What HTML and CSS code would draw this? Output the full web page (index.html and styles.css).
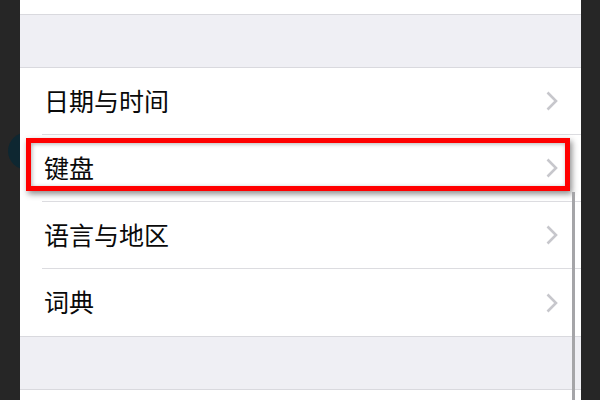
FILE: index.html
```html
<!DOCTYPE html>
<html lang="zh-CN">
<head>
<meta charset="utf-8">
<title>通用</title>
<link rel="stylesheet" href="styles.css">
</head>
<body>
<div class="blob"></div>
<div class="panel">
  <div class="top"></div>
  <div class="spacer"></div>
  <div class="group">
    <div class="row"><span class="label">日期与时间</span><svg class="chev" width="12" height="20" viewBox="0 0 12 20"><polyline points="1.5,1.5 10,10 1.5,18.5" fill="none" stroke="#c7c7cc" stroke-width="2.6"/></svg></div>
    <div class="row"><span class="label">键盘</span><svg class="chev" width="12" height="20" viewBox="0 0 12 20"><polyline points="1.5,1.5 10,10 1.5,18.5" fill="none" stroke="#c7c7cc" stroke-width="2.6"/></svg></div>
    <div class="row"><span class="label">语言与地区</span><svg class="chev" width="12" height="20" viewBox="0 0 12 20"><polyline points="1.5,1.5 10,10 1.5,18.5" fill="none" stroke="#c7c7cc" stroke-width="2.6"/></svg></div>
    <div class="row last"><span class="label">词典</span><svg class="chev" width="12" height="20" viewBox="0 0 12 20"><polyline points="1.5,1.5 10,10 1.5,18.5" fill="none" stroke="#c7c7cc" stroke-width="2.6"/></svg></div>
  </div>
  <div class="spacer"></div>
  <div class="bottom"></div>
  <div class="highlight"></div>
  <div class="scrollbar"></div>
</div>
</body>
</html>
```
FILE: styles.css
```css
html, body {
  margin: 0;
  padding: 0;
  height: 100%;
  overflow: hidden;
  background: #262626;
}
body {
  position: relative;
  font-family: "Noto Sans CJK SC", "Noto Sans", sans-serif;
}
.blob {
  position: absolute;
  left: 8px;
  top: 132px;
  width: 40px;
  height: 38px;
  border-radius: 50%;
  background: #0e2731;
}
.panel {
  position: relative;
  margin-left: 20px;
  width: 561px;
  height: 400px;
  background: #efeff4;
  overflow: hidden;
}
.top {
  height: 14px;
  background: #fff;
  border-bottom: 1px solid #d9d9de;
}
.spacer {
  height: 52px;
  background: #efeff4;
}
.group {
  background: #fff;
  border-top: 1px solid #d9d9de;
  border-bottom: 1px solid #d9d9de;
}
.row {
  height: 67px;
  margin-left: 22px;
  padding-right: 23px;
  display: flex;
  align-items: center;
  justify-content: space-between;
  box-sizing: border-box;
  border-bottom: 1px solid #dcdce0;
}
.row.last {
  border-bottom: none;
  height: 67px;
}
.label {
  font-size: 25px;
  color: #0a0a0a;
  padding-left: 2px;
  padding-bottom: 3px;
}
.chev {
  display: block;
}
.bottom {
  height: 20px;
  background: #fff;
  border-top: 1px solid #d9d9de;
}
.highlight {
  position: absolute;
  left: 6px;
  top: 138px;
  width: 544px;
  height: 53px;
  box-sizing: border-box;
  border: 5px solid #ff0000;
  box-shadow: 2px 3px 6px rgba(0, 0, 0, 0.45), inset 1px 1px 4px rgba(0, 0, 0, 0.3);
}
.scrollbar {
  position: absolute;
  left: 552px;
  top: 192px;
  width: 3px;
  height: 208px;
  background: #a5a5a8;
}
```
